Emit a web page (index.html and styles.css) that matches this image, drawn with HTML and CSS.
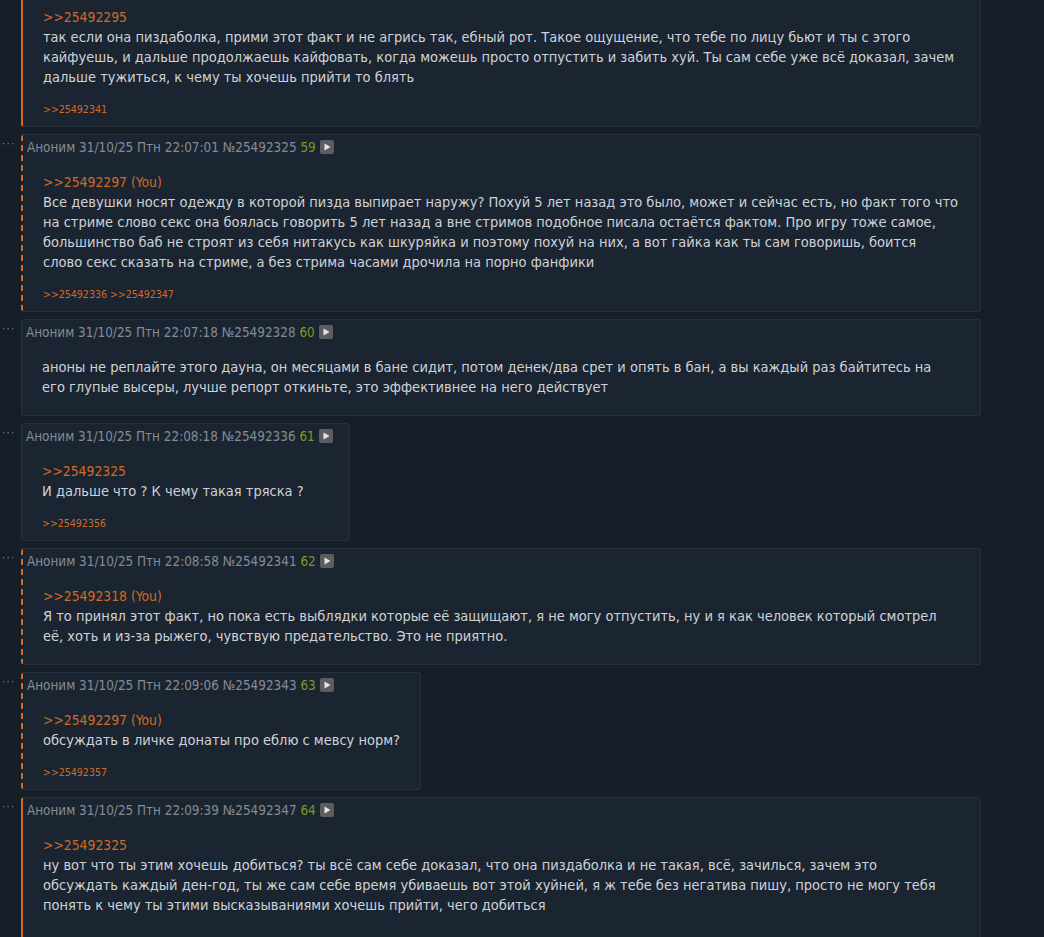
FILE: index.html
```html
<!DOCTYPE html>
<html lang="ru">
<head>
<meta charset="utf-8">
<title>Тред</title>
<link rel="stylesheet" href="styles.css">
</head>
<body>
<div class="thread">

  <div class="row">
    <div class="dots"><svg width="21" height="26" viewBox="0 0 21 26"><rect x="3" y="9" width="1.3" height="1.3"/><rect x="7.5" y="9" width="1.3" height="1.3"/><rect x="12" y="9" width="1.3" height="1.3"/></svg></div>
    <div class="post wide solid">
      <div class="head">Аноним 31/10/25 Птн 22:06:40 №25492318 <span class="num">58</span> <span class="play"><svg width="14" height="14" viewBox="0 0 14 14"><polygon points="4.5,3.5 10.5,7 4.5,10.5"/></svg></span></div>
      <div class="msg"><span class="reply">&gt;&gt;25492295</span><br>так если она пиздаболка, прими этот факт и не агрись так, ебный рот. Такое ощущение, что тебе по лицу бьют и ты с этого<br>кайфуешь, и дальше продолжаешь кайфовать, когда можешь просто отпустить и забить хуй. Ты сам себе уже всё доказал, зачем<br>дальше тужиться, к чему ты хочешь прийти то блять</div>
      <div class="backlinks">&gt;&gt;25492341</div>
    </div>
  </div>

  <div class="row">
    <div class="dots"><svg width="21" height="26" viewBox="0 0 21 26"><rect x="3" y="9" width="1.3" height="1.3"/><rect x="7.5" y="9" width="1.3" height="1.3"/><rect x="12" y="9" width="1.3" height="1.3"/></svg></div>
    <div class="post wide dashed">
      <div class="head">Аноним 31/10/25 Птн 22:07:01 №25492325 <span class="num">59</span> <span class="play"><svg width="14" height="14" viewBox="0 0 14 14"><polygon points="4.5,3.5 10.5,7 4.5,10.5"/></svg></span></div>
      <div class="msg"><span class="reply">&gt;&gt;25492297 (You)</span><br>Все девушки носят одежду в которой пизда выпирает наружу? Похуй 5 лет назад это было, может и сейчас есть, но факт того что<br>на стриме слово секс она боялась говорить 5 лет назад а вне стримов подобное писала остаётся фактом. Про игру тоже самое,<br>большинство баб не строят из себя нитакусь как шкуряйка и поэтому похуй на них, а вот гайка как ты сам говоришь, боится<br>слово секс сказать на стриме, а без стрима часами дрочила на порно фанфики</div>
      <div class="backlinks">&gt;&gt;25492336 &gt;&gt;25492347</div>
    </div>
  </div>

  <div class="row">
    <div class="dots"><svg width="21" height="26" viewBox="0 0 21 26"><rect x="3" y="9" width="1.3" height="1.3"/><rect x="7.5" y="9" width="1.3" height="1.3"/><rect x="12" y="9" width="1.3" height="1.3"/></svg></div>
    <div class="post wide">
      <div class="head">Аноним 31/10/25 Птн 22:07:18 №25492328 <span class="num">60</span> <span class="play"><svg width="14" height="14" viewBox="0 0 14 14"><polygon points="4.5,3.5 10.5,7 4.5,10.5"/></svg></span></div>
      <div class="msg">аноны не реплайте этого дауна, он месяцами в бане сидит, потом денек/два срет и опять в бан, а вы каждый раз байтитесь на<br>его глупые высеры, лучше репорт откиньте, это эффективнее на него действует</div>
    </div>
  </div>

  <div class="row">
    <div class="dots"><svg width="21" height="26" viewBox="0 0 21 26"><rect x="3" y="9" width="1.3" height="1.3"/><rect x="7.5" y="9" width="1.3" height="1.3"/><rect x="12" y="9" width="1.3" height="1.3"/></svg></div>
    <div class="post">
      <div class="head">Аноним 31/10/25 Птн 22:08:18 №25492336 <span class="num">61</span> <span class="play"><svg width="14" height="14" viewBox="0 0 14 14"><polygon points="4.5,3.5 10.5,7 4.5,10.5"/></svg></span></div>
      <div class="msg"><span class="reply">&gt;&gt;25492325</span><br>И дальше что ? К чему такая тряска ?</div>
      <div class="backlinks">&gt;&gt;25492356</div>
    </div>
  </div>

  <div class="row">
    <div class="dots"><svg width="21" height="26" viewBox="0 0 21 26"><rect x="3" y="9" width="1.3" height="1.3"/><rect x="7.5" y="9" width="1.3" height="1.3"/><rect x="12" y="9" width="1.3" height="1.3"/></svg></div>
    <div class="post wide dashed">
      <div class="head">Аноним 31/10/25 Птн 22:08:58 №25492341 <span class="num">62</span> <span class="play"><svg width="14" height="14" viewBox="0 0 14 14"><polygon points="4.5,3.5 10.5,7 4.5,10.5"/></svg></span></div>
      <div class="msg"><span class="reply">&gt;&gt;25492318 (You)</span><br>Я то принял этот факт, но пока есть выблядки которые её защищают, я не могу отпустить, ну и я как человек который смотрел<br>её, хоть и из-за рыжего, чувствую предательство. Это не приятно.</div>
    </div>
  </div>

  <div class="row">
    <div class="dots"><svg width="21" height="26" viewBox="0 0 21 26"><rect x="3" y="9" width="1.3" height="1.3"/><rect x="7.5" y="9" width="1.3" height="1.3"/><rect x="12" y="9" width="1.3" height="1.3"/></svg></div>
    <div class="post dashed">
      <div class="head">Аноним 31/10/25 Птн 22:09:06 №25492343 <span class="num">63</span> <span class="play"><svg width="14" height="14" viewBox="0 0 14 14"><polygon points="4.5,3.5 10.5,7 4.5,10.5"/></svg></span></div>
      <div class="msg"><span class="reply">&gt;&gt;25492297 (You)</span><br>обсуждать в личке донаты про еблю с мевсу норм?</div>
      <div class="backlinks">&gt;&gt;25492357</div>
    </div>
  </div>

  <div class="row">
    <div class="dots"><svg width="21" height="26" viewBox="0 0 21 26"><rect x="3" y="9" width="1.3" height="1.3"/><rect x="7.5" y="9" width="1.3" height="1.3"/><rect x="12" y="9" width="1.3" height="1.3"/></svg></div>
    <div class="post wide solid tail">
      <div class="head">Аноним 31/10/25 Птн 22:09:39 №25492347 <span class="num">64</span> <span class="play"><svg width="14" height="14" viewBox="0 0 14 14"><polygon points="4.5,3.5 10.5,7 4.5,10.5"/></svg></span></div>
      <div class="msg"><span class="reply">&gt;&gt;25492325</span><br>ну вот что ты этим хочешь добиться? ты всё сам себе доказал, что она пиздаболка и не такая, всё, зачилься, зачем это<br>обсуждать каждый ден-год, ты же сам себе время убиваешь вот этой хуйней, я ж тебе без негатива пишу, просто не могу тебя<br>понять к чему ты этими высказываниями хочешь прийти, чего добиться</div>
    </div>
  </div>

</div>
</body>
</html>
```

FILE: styles.css
```css
html, body {
  margin: 0;
  padding: 0;
}

body {
  background: #161e27;
  font-family: "DejaVu Sans Condensed", "DejaVu Sans", sans-serif;
  font-stretch: condensed;
  overflow: hidden;
}

.thread {
  width: 981px;
  margin-top: -31px;
  display: flex;
  flex-direction: column;
  gap: 7px;
}

.row {
  display: flex;
  align-items: flex-start;
}

.dots {
  flex: none;
  width: 21px;
  height: 26px;
}

.dots svg {
  display: block;
  fill: #6c737b;
}

.post {
  flex: 0 1 auto;
  min-width: 0;
  background-color: #1b2532;
  border: 1px solid #27313e;
  border-radius: 3px;
  padding: 0 0 6px 4px;
}

.post.wide {
  flex: 1 1 auto;
}

.post.tail {
  padding-bottom: 30px;
}

.post.solid {
  border-left: 2px solid #d06a24;
}

.post.dashed {
  border-left-width: 0;
  padding-left: 6px;
  background-image: repeating-linear-gradient(to bottom, #d06a24 0, #d06a24 6px, transparent 6px, transparent 10px);
  background-size: 2px 100%;
  background-repeat: no-repeat;
}

.head {
  height: 24px;
  padding: 1px 16px 0 0;
  line-height: 24px;
  font-size: 13.4px;
  color: #868c93;
  white-space: nowrap;
}

.num {
  color: #7b9a1c;
}

.play {
  display: inline-block;
  width: 14px;
  height: 14px;
  vertical-align: -2px;
  background: #5c5d5f;
  border-radius: 2px;
}

.play svg {
  display: block;
  fill: #e4e4e4;
}

.msg {
  margin: 12px 20px 12px 16px;
  font-size: 14.5px;
  line-height: 20px;
  color: #cfd2d6;
  white-space: nowrap;
}

.reply {
  color: #d06a24;
  font-size: 13.8px;
  line-height: 1;
}

.backlinks {
  margin: 0 16px 3px;
  padding-top: 2px;
  font-size: 10.5px;
  line-height: 16px;
  color: #d06a24;
}
```
